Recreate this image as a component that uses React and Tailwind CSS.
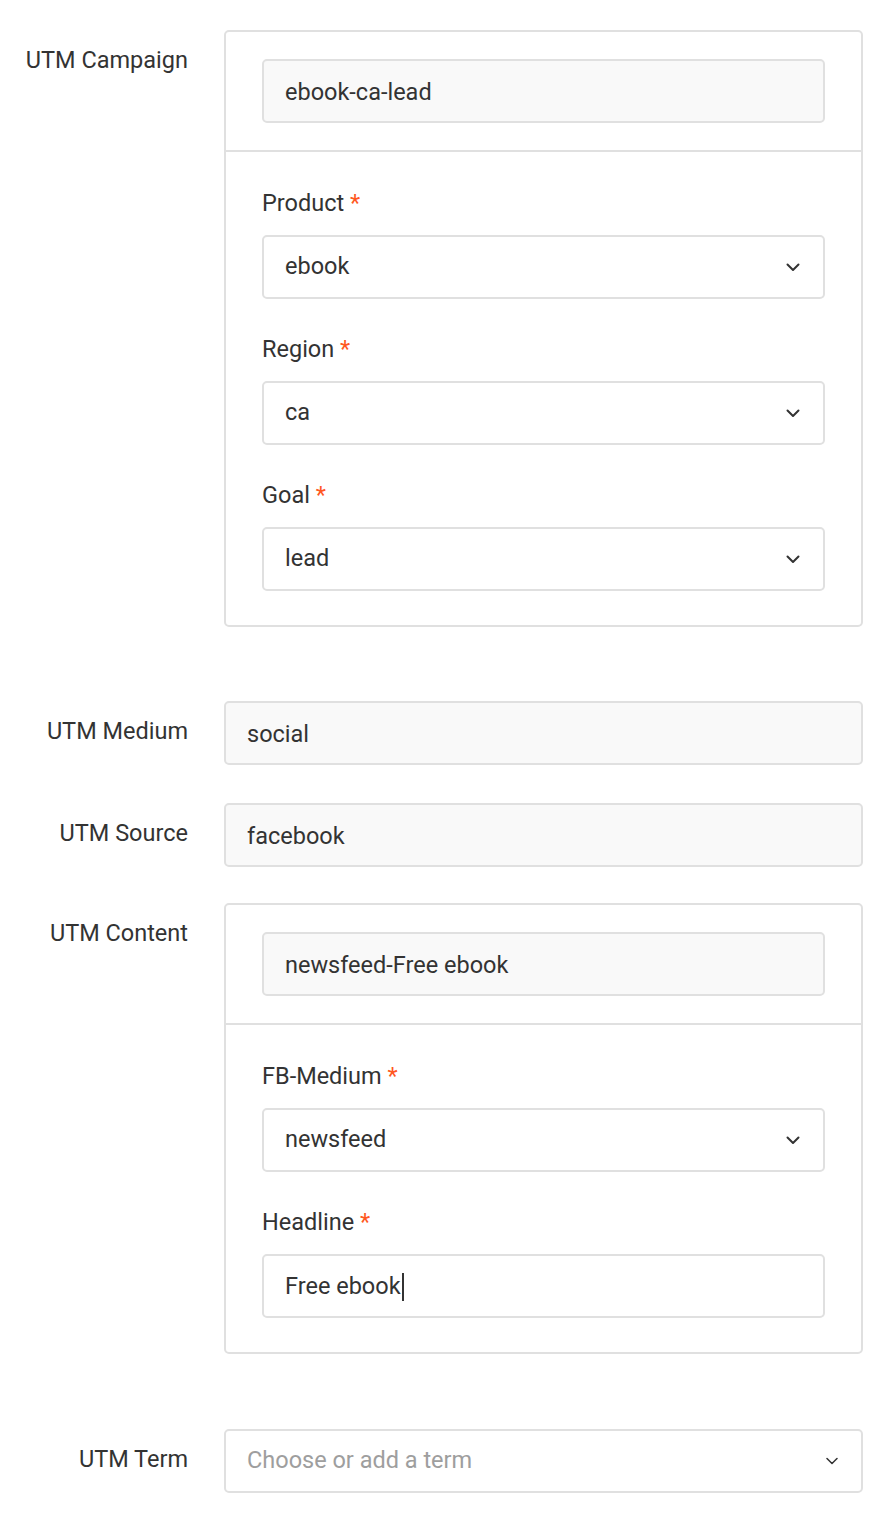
import React from "react";

const font = { fontFamily: "Roboto, 'Noto Sans', sans-serif" };

const Chevron = ({ small }) =>
  small ? (
    <svg width="12" height="8" viewBox="0 0 12 8" fill="none" className="shrink-0">
      <path d="M1 1.5l5 5 5-5" stroke="#333" strokeWidth="1.5" strokeLinecap="round" strokeLinejoin="round" />
    </svg>
  ) : (
    <svg width="14" height="9" viewBox="0 0 14 9" fill="none" className="shrink-0">
      <path d="M1.5 1.5l5.5 5.5 5.5-5.5" stroke="#333" strokeWidth="2" strokeLinecap="round" strokeLinejoin="round" />
    </svg>
  );

// Read-only grey field
const Field = ({ value }) => (
  <div className="flex h-[64px] items-center rounded-[5px] border-2 border-[#e0e0e0] bg-[#f9f9f9] px-[21px] pt-[3px] text-[23.5px] text-[#333]">
    {value}
  </div>
);

// Select-like control
const Select = ({ value, placeholder, small }) => (
  <div className="flex h-[64px] items-center justify-between rounded-[5px] border-2 border-[#e0e0e0] bg-white pl-[21px] pr-[23px] text-[23.5px]">
    {value ? (
      <span className="text-[#333]">{value}</span>
    ) : (
      <span className="text-[#9e9e9e]">{placeholder}</span>
    )}
    <Chevron small={small} />
  </div>
);

const TextInput = ({ value }) => (
  <div className="flex h-[64px] items-center rounded-[5px] border-2 border-[#e0e0e0] bg-white px-[21px] text-[23.5px] text-[#333]">
    <span className="pt-[1px]">{value}</span>
    <span className="ml-[1px] mt-[1px] inline-block h-[28px] w-[2px] bg-[#333]" />
  </div>
);

const SubField = ({ label, children }) => (
  <div className="flex flex-col">
    <div className="mb-[16px] text-[23.5px] leading-[32px] text-[#333]">
      {label} <span className="text-[#ff5722]">*</span>
    </div>
    {children}
  </div>
);

const Group = ({ value, children }) => (
  <div className="rounded-[5px] border-2 border-[#e0e0e0] bg-white">
    <div className="px-[36px] py-[27px]">
      <Field value={value} />
    </div>
    <div className="flex flex-col gap-[34px] border-t-2 border-[#e0e0e0] px-[36px] pt-[35px] pb-[34px]">
      {children}
    </div>
  </div>
);

const Row = ({ label, children, className = "" }) => (
  <div className={`flex gap-[36px] ${className}`}>
    <div className="w-[188px] shrink-0 pt-[14px] text-right text-[23.5px] leading-[32px] text-[#333]">
      {label}
    </div>
    <div className="min-w-0 flex-1">{children}</div>
  </div>
);

export default function App() {
  return (
    <div className="min-h-screen bg-white pt-[30px] pr-[27px]" style={font}>
      <Row label="UTM Campaign" className="mb-[74px]">
        <Group value="ebook-ca-lead">
          <SubField label="Product">
            <Select value="ebook" />
          </SubField>
          <SubField label="Region">
            <Select value="ca" />
          </SubField>
          <SubField label="Goal">
            <Select value="lead" />
          </SubField>
        </Group>
      </Row>

      <Row label="UTM Medium" className="mb-[38px]">
        <Field value="social" />
      </Row>

      <Row label="UTM Source" className="mb-[36px]">
        <Field value="facebook" />
      </Row>

      <Row label="UTM Content" className="mb-[75px]">
        <Group value="newsfeed-Free ebook">
          <SubField label="FB-Medium">
            <Select value="newsfeed" />
          </SubField>
          <SubField label="Headline">
            <TextInput value="Free ebook" />
          </SubField>
        </Group>
      </Row>

      <Row label="UTM Term">
        <Select placeholder="Choose or add a term" small />
      </Row>
    </div>
  );
}
